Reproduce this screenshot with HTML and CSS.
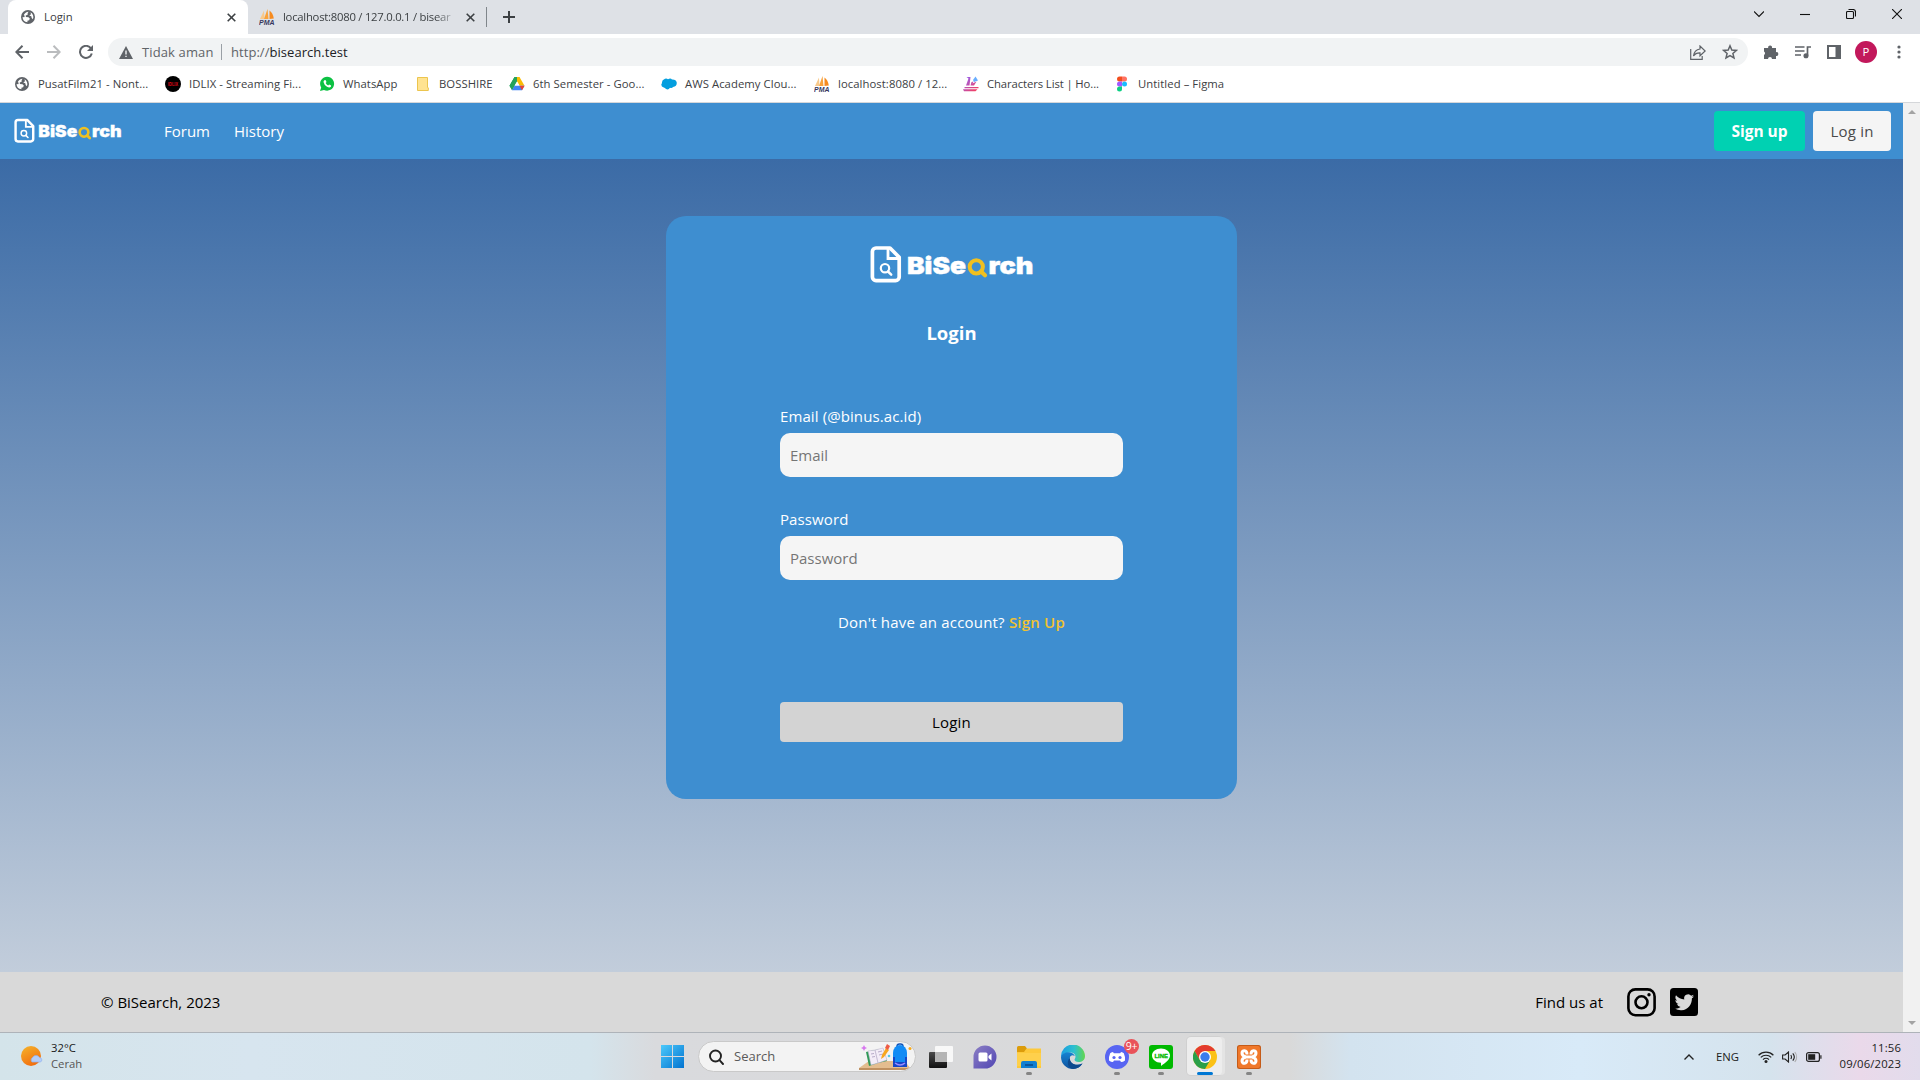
FILE: index.html
```html
<!DOCTYPE html>
<html lang="id">
<head>
<meta charset="utf-8">
<title>Login</title>
<link rel="stylesheet" href="styles.css">
</head>
<body>
<svg class="defs" width="0" height="0">
  <defs>
    <symbol id="globe" viewBox="0 0 14 14"><circle cx="7" cy="7" r="7" fill="#5f6368"/><path d="M7.600 1.700 6.500 3.200 7 4.300 4.600 5.800 5 7l2.500.2 1.300 1.300-.6 1.700-1.800.6.100 1.500A5.400 5.400 0 0 1 1.600 7l1.600.3.600-1.300-1-1A5.400 5.400 0 0 1 7.600 1.700zM9.500 2.300a5.400 5.400 0 0 1 2.400 6.900L10.700 8l-.4-1.700-2-.8 1.700-1.200z" fill="#fff"/></symbol>
    <symbol id="pma" viewBox="0 0 16 16"><path d="M5 1.500 5.500 10H1z" fill="#f8c98b"/><path d="M8.500 0 9.500 10H5z" fill="#f9a23b"/><path d="M10.500 1.500Q14 4 14.800 9.500L10.500 10z" fill="#f68b1f"/><text x="0" y="15.600" font-family="Liberation Sans" font-weight="700" font-style="italic" font-size="6.800" textLength="15.500" lengthAdjust="spacingAndGlyphs" fill="#38385e">PMA</text></symbol>
    <symbol id="logo" viewBox="870 245 164 39">
      <path d="M876 248h14l9.200 9.200V277a3.600 3.600 0 0 1-3.600 3.600H876a3.600 3.600 0 0 1-3.600-3.600v-25.400A3.600 3.600 0 0 1 876 248z" fill="none" stroke="#fff" stroke-width="3.700" stroke-linejoin="round"/>
      <path d="M888 248v10.500h11.500" fill="none" stroke="#fff" stroke-width="2.800"/>
      <circle cx="885" cy="268.200" r="4.200" fill="none" stroke="#fff" stroke-width="2.200"/><path d="m888 271.500 3.200 3.100" stroke="#fff" stroke-width="2.500" stroke-linecap="round"/>
      <g font-family="Inter, sans-serif" font-weight="900" font-size="23.400" fill="#fff" stroke="#fff" stroke-width=".4">
        <text x="907" y="273.700" textLength="59" lengthAdjust="spacingAndGlyphs">BiSe</text>
        <text x="988.500" y="273.700" textLength="45" lengthAdjust="spacingAndGlyphs">rch</text>
      </g>
      <circle cx="976.300" cy="266.800" r="6.600" fill="none" stroke="#f0c020" stroke-width="4"/><path d="m981 271.500 4 3.800" stroke="#f0c020" stroke-width="4.200" stroke-linecap="round"/>
    </symbol>
  </defs>
</svg>

<header class="chrome">
  <div class="tabstrip">
    <div class="tab tab-active">
      <svg width="14" height="14"><use href="#globe"/></svg>
      <span class="tab-title">Login</span>
      <svg width="9" height="9" viewBox="0 0 9 9" class="line"><path d="m.7.7 7.600 7.600M8.300.7.700 8.300"/></svg>
    </div>
    <div class="tab tab-second">
      <svg width="16" height="16"><use href="#pma"/></svg>
      <span class="tab-title fade">localhost:8080 / 127.0.0.1 / bisear</span>
      <svg width="9" height="9" viewBox="0 0 9 9" class="line"><path d="m.7.7 7.600 7.600M8.300.7.700 8.300"/></svg>
    </div>
    <svg class="line newtab" width="12" height="12" viewBox="0 0 12 12"><path d="M6 0v12M0 6h12"/></svg>
    <div class="window-buttons">
      <svg width="10" height="10" viewBox="0 0 10 10"><path d="m0 2.500 5 5 5-5"/></svg>
      <svg width="10" height="10" viewBox="0 0 10 10"><path d="M0 5.500h10"/></svg>
      <svg width="10" height="10" viewBox="0 0 10 10"><rect x=".5" y="2.500" width="7" height="7" rx="1"/><path d="M2.500.5H7A2.500 2.500 0 0 1 9.500 3v4.500"/></svg>
      <svg width="10" height="10" viewBox="0 0 10 10"><path d="m0 0 10 10M10 0 0 10"/></svg>
    </div>
  </div>

  <div class="toolbar">
    <svg class="nav-ico" width="14" height="14" viewBox="0 0 14 14"><path d="M14 7H1.500M7.500.8 1.300 7l6.200 6.200"/></svg>
    <svg class="nav-ico nav-off" width="14" height="14" viewBox="0 0 14 14"><path d="M0 7h12.500M6.500.8 12.700 7l-6.200 6.200"/></svg>
    <svg class="nav-ico" width="14" height="14" viewBox="0 0 14 14"><path d="M12 3.500A6 6 0 1 0 12.800 8.500"/><path d="M14 0v6H8z" fill="#5f6368" stroke="none"/></svg>
    <div class="omnibox">
      <svg width="14" height="13" viewBox="0 0 14 13"><path d="M7 0 14 13H0z" fill="#5f6368"/><path d="M6.300 4.500h1.400v4H6.300zM6.300 9.700h1.400v1.400H6.300z" fill="#f1f3f4"/></svg>
      <span class="insecure">Tidak aman</span>
      <span class="url">http://<b>bisearch.test</b></span>
      <svg width="16" height="15" viewBox="0 0 16 15" fill="none" stroke="#5f6368" stroke-width="1.200"><path d="M.7 4v10.300h11.500V11M10 1v3C6 4.500 4 7 3.500 11 5 8.500 7 7.700 10 7.800v3L15.200 6z"/></svg>
      <svg class="star" width="16" height="16" viewBox="0 0 16 16" fill="none" stroke="#5f6368" stroke-width="1.500"><path d="m8 1.800 1.800 4.200 4.600.4-3.500 3 1.100 4.500L8 11.500l-4 2.400 1.100-4.500-3.500-3L6.200 6z"/></svg>
    </div>
    <div class="actions">
      <svg width="16" height="16" viewBox="0 0 16 16"><path d="M1 4h4.200a2 2 0 1 1 3.800 0h4v4.200a1.900 1.900 0 1 1 0 3.700V15H9a2 2 0 0 0-4 0H1v-4a2 2 0 0 0 0-3.500z" fill="#5f6368"/></svg>
      <svg width="16" height="14" viewBox="0 0 16 14" fill="none" stroke="#5f6368" stroke-width="1.700"><path d="M0 2h9.500M0 6h9.500M0 10h6M12.500 10.500V2H16"/><circle cx="11" cy="10.800" r="1.700" fill="#5f6368"/></svg>
      <svg width="14" height="14" viewBox="0 0 14 14"><path d="M0 0h14v14H0zM2 2v10h6.500V2z" fill="#5f6368" fill-rule="evenodd"/></svg>
      <span class="avatar">P</span>
      <svg width="4" height="14" viewBox="0 0 4 14" fill="#5f6368"><circle cx="2" cy="2" r="1.600"/><circle cx="2" cy="7" r="1.600"/><circle cx="2" cy="12" r="1.600"/></svg>
    </div>
  </div>

  <nav class="bookmarks">
    <a><svg width="16" height="14" viewBox="0 0 16 14"><use href="#globe" x="1" width="14" height="14"/></svg>PusatFilm21 - Nont...</a>
    <a><svg width="16" height="16" viewBox="0 0 16 16"><circle cx="8" cy="8" r="8"/><text x="3" y="10" font-family="Liberation Sans" font-size="5" font-weight="700" fill="#e5091a" textLength="10" lengthAdjust="spacingAndGlyphs">IDLIX</text></svg>IDLIX - Streaming Fi...</a>
    <a><svg width="16" height="16" viewBox="0 0 16 16"><path d="M1 15 2.200 11.500A7 7 0 1 1 5 14z" fill="#0cc143"/><path d="M5.300 4.300 6.500 4l1 2-.8 1q.8 1.700 2.500 2.400l.9-.9 2 1-.2 1.300Q10.500 12.300 8 10.800 5 8.800 4.500 6 4.600 4.800 5.300 4.300z" fill="#fff"/></svg>WhatsApp</a>
    <a><svg width="16" height="14" viewBox="0 0 16 14"><path d="M2.500.5h10v10l.8.300v2.700h-10.800z" fill="#ffe391" stroke="#ecc54e"/></svg>BOSSHIRE</a>
    <a><svg width="16" height="14" viewBox="0 0 16 14"><path d="M5.500 0h5L8 4.500 3.200 13 .5 8.800z" fill="#25a35a"/><path d="M5.500 0h5l5 8.800h-5z" fill="#fbbc04"/><path d="M5.500 0h2.500v4.500L3 13.300.5 8.800z" fill="#25a35a"/><path d="M8 4.500 10.500 8.800h-5z" fill="#fff"/><path d="m3 13.300 2.500-4.500h10L13 13.300z" fill="#4285f4"/><path d="M10.500 8.800h5L13 13.300z" fill="#ea4335"/></svg>6th Semester - Goo...</a>
    <a><svg width="16" height="12" viewBox="0 0 16 12"><path d="M4 .7q1.500-.7 3 .6Q9.500-.5 11 1.600q4-.3 4.800 3.200Q15.800 8.800 12 9q-1 1.700-3 .8-1.500 2.500-4 1.200Q4 9.500 2.800 9.500.2 9 .3 6.500L1 5Q.5 2 4 .7z" fill="#049fdf"/></svg>AWS Academy Clou...</a>
    <a><svg width="16" height="16"><use href="#pma"/></svg>localhost:8080 / 12...</a>
    <a class="tight"><svg width="16" height="16" viewBox="0 0 16 16"><defs><linearGradient id="hy" y2="1"><stop stop-color="#8a63ff"/><stop offset="1" stop-color="#ff3a4d"/></linearGradient></defs><path d="M3.500 1h4L6.500 9.500H3l2.500-7zM7.500 9.500 8.500 6l2-.5-1 2 4-2-2.500 4zM1.500 11h14v1.200h-14zM0 13.300h14.500l-2 2H1z" fill="url(#hy)"/><path d="m10 4 2.500-3.500 2.500 4-4 1.500z" fill="#68aeff"/></svg>Characters List | Ho...</a>
    <a><svg width="16" height="16" viewBox="0 0 16 16"><path d="M8 .5H5.500a2.500 2.500 0 0 0 0 5H8z" fill="#f24e1e"/><path d="M8 .5h2.500a2.500 2.500 0 0 1 0 5H8z" fill="#ff7262"/><path d="M8 5.500H5.500a2.500 2.500 0 0 0 0 5H8z" fill="#a259ff"/><circle cx="10.500" cy="8" r="2.500" fill="#1abcfe"/><path d="M8 10.500H5.500A2.500 2.500 0 1 0 8 13z" fill="#0acf83"/></svg>Untitled – Figma</a>
  </nav>
</header>

<div class="viewport">
  <div class="page">
    <nav class="navbar">
      <svg class="brand" width="108" height="25.700"><use href="#logo"/></svg>
      <a class="forum">Forum</a>
      <a class="history">History</a>
      <div class="nav-buttons">
        <button class="btn btn-signup">Sign up</button>
        <button class="btn btn-login">Log in</button>
      </div>
    </nav>
    <main class="hero">
      <form class="card">
        <svg class="card-logo" width="164" height="39"><use href="#logo"/></svg>
        <h1>Login</h1>
        <div class="field">
          <label>Email (@binus.ac.id)</label>
          <input type="text" placeholder="Email">
        </div>
        <div class="field">
          <label>Password</label>
          <input type="password" placeholder="Password">
        </div>
        <p class="ask">Don't have an account? <a>Sign Up</a></p>
        <button type="button" class="submit">Login</button>
      </form>
    </main>
    <footer class="footer">
      <span class="copyright">© BiSearch, 2023</span>
      <span class="find">Find us at</span>
      <svg width="29" height="29" viewBox="0 0 29 29" fill="none" stroke="#000"><rect x="1.400" y="1.400" width="26.200" height="25.800" rx="7" stroke-width="2.600"/><circle cx="14.500" cy="14.300" r="6" stroke-width="2.600"/><circle cx="22" cy="6.800" r="1.700" fill="#000" stroke="none"/></svg>
      <svg width="28" height="28" viewBox="0 0 28 28"><rect width="28" height="28" rx="3.500"/><path d="M24 8.200q-1 .5-2 .6 1.200-.8 1.700-2-1.200.6-2.500.9a4 4 0 0 0-6.900 3.700q-5-.3-8.300-4.200-1.700 3.300 1.200 5.400-1 0-1.800-.5.100 3.200 3.200 4-.9.200-1.800 0 1 2.600 3.800 2.800-2.600 2-5.900 1.700Q8 22.500 11.500 22.300C18.500 22 22 16 21.900 10.300q1.200-.8 2.100-2.100z" fill="#d9d9d9"/></svg>
    </footer>
  </div>
  <div class="scrollbar">
    <svg width="8" height="4" viewBox="0 0 8 4"><path d="M4 0l4 4H0z" fill="#a3a3a3"/></svg>
    <svg width="8" height="4" viewBox="0 0 8 4"><path d="M4 4l4-4H0z" fill="#a3a3a3"/></svg>
  </div>
</div>

<footer class="taskbar">
  <div class="weather">
    <svg width="22" height="21" viewBox="0 0 22 21"><defs><linearGradient id="sun" x2=".5" y2="1"><stop stop-color="#f5b52c"/><stop offset="1" stop-color="#f2700f"/></linearGradient></defs><circle cx="10" cy="10" r="10" fill="url(#sun)"/><path d="M11 16a3 3 0 0 1 .5-4.500 4 4 0 0 1 7 0A2.400 2.400 0 0 1 19.500 16z" fill="#b4cdf8" stroke="#8fb0ef" stroke-width=".7"/></svg>
    <div class="stack">32°C<span class="dim">Cerah</span></div>
  </div>
  <div class="apps">
    <div class="app"><svg width="23" height="23" viewBox="0 0 23 23"><defs><linearGradient id="win" x2="1" y2="1"><stop stop-color="#4cc9fb"/><stop offset="1" stop-color="#0273d0"/></linearGradient></defs><path d="M0 0h11v11H0zM12 0h11v11H12zM0 12h11v11H0zM12 12h11v11H12z" fill="url(#win)"/></svg></div>
    <div class="search">
      <svg width="15" height="16" viewBox="0 0 15 16" fill="none" stroke="#222" stroke-width="1.900"><circle cx="6.500" cy="7" r="5.500"/><path d="m10.500 11.200 3.500 3.800" stroke-linecap="round"/></svg>
      <span>Search</span>
      <svg width="54" height="28" viewBox="0 0 54 28"><path d="M10 18h36l5 7H0z" fill="#e4bd8f"/><path d="M0 25h50l-4 2H0z" fill="#bf9060"/><path d="m7 9 9-2 8-1 4 12-9 2-9 3z" fill="#2f9a57"/><path d="m9 8 7-1 3 13-7 2zM16 7l8-2 4 12-9 3z" fill="#f3ecf7" stroke="#b9afc9" stroke-width=".5"/><path d="m12 11 3-.5M13 14l3-.5M19 9l4-1M20 12l4-1" stroke="#b8abc9"/><path d="m22 16 1-4 4-7 3 2-5 7z" fill="#f8a61e"/><path d="m26 5 2-4 3 2-2 4z" fill="#ee5b45"/><rect x="38" y="1" width="6" height="5" rx="2.500" fill="none" stroke="#1555b8" stroke-width="1.500"/><path d="M34 10a7 8 0 0 1 14 0v13H34z" fill="#128bf5"/><path d="M34 14h2v5h10v-5h2v10H34z" fill="#1646c7"/><path d="M36 20q5 4 10 0" fill="none" stroke="#9c8cff" stroke-width="1.500"/><path d="m5 2 1 2 2 1-2 1-1 2-1-2-2-1 2-1z" fill="#d777ee"/><circle cx="51" cy="5.500" r="1.500" fill="#f6a91d"/><circle cx="30" cy="13" r="1.300" fill="#58c8e8"/></svg>
    </div>
    <div class="app"><svg width="24" height="22" viewBox="0 0 24 22"><defs><linearGradient id="tv" y2="1" x2="0"><stop stop-color="#4b4b4b"/><stop offset="1" stop-color="#111"/></linearGradient></defs><rect y="6" width="18" height="16" rx="1" fill="url(#tv)"/><rect x="6" width="18" height="16" rx="1" fill="#fff" fill-opacity=".8"/><path d="M6 6h12v10H6z" fill="#b5b5b5"/></svg></div>
    <div class="app"><svg width="24" height="24" viewBox="0 0 24 24"><defs><linearGradient id="chat" x2="1" y2="1"><stop stop-color="#8c7fc4"/><stop offset="1" stop-color="#5146b4"/></linearGradient></defs><path d="M.5 23.500V12A11.500 11.500 0 1 1 12 23.500z" fill="url(#chat)"/><rect x="5.500" y="7.500" width="9" height="9" rx="1.500" fill="#fff"/><path d="m15.500 11 3-2.500v7l-3-2.500z" fill="#fff"/></svg></div>
    <div class="app running"><svg width="24" height="22" viewBox="0 0 24 22"><path d="M0 1.500A1.500 1.500 0 0 1 1.500 0H8l2 2.500L8 6H0z" fill="#dc9c0b"/><path d="M9.500 2.500H24V22H0V6h7z" fill="#fdc93b"/><path d="M0 7h24v13H0z" fill="#ffd75e" opacity=".5"/><path d="M4 17a2 2 0 0 1 2-2h12a2 2 0 0 1 2 2v5H4z" fill="#127fd2"/><path d="M8 18h8v2H8z" fill="#0b559c"/></svg></div>
    <div class="app"><svg width="24" height="24" viewBox="0 0 24 24"><defs><linearGradient id="ed1" x2="1"><stop stop-color="#1b9de2"/><stop offset=".55" stop-color="#2ec0cf"/><stop offset="1" stop-color="#62d74d"/></linearGradient><linearGradient id="ed2" y2="1" x2="0"><stop stop-color="#1583d2"/><stop offset="1" stop-color="#0f539f"/></linearGradient></defs><path d="M0 12a12 12 0 0 1 24-1c0 4-3 6-6.500 6-2.500 0-4-1-4-2.200 0-1 1-1.300 1-3.100C14.500 9 12 7.500 9 7.500 4 7.500 1 10 0 12z" fill="url(#ed1)"/><path d="M0 12c1-3.500 5-5 8-4.700 3 .3 5.300 1.900 5.800 3.700-4-2-5.300 1-5 3.500C9.500 19 15 21.500 21.500 18.500A12 12 0 0 1 12 24 12 12 0 0 1 0 12z" fill="url(#ed2)"/><path d="M8.800 13c0 6 6.700 8.500 12.700 5.500A12 12 0 0 1 12 24C7 23 5 17 8.800 13z" fill="#0d4a8e"/></svg></div>
    <div class="app running"><svg width="24" height="24" viewBox="0 0 24 24"><circle cx="12" cy="12" r="12" fill="#5865f2"/><path d="M8 7q-2 .3-2.800 1.300Q3.500 12 4 15.500 6 17 8 17l1-1.500h6l1 1.500q2 0 4-1.500.5-3.500-1.200-7.200Q18 7.300 16 7l-.8 1.200H8.800z" fill="#fff"/><circle cx="9" cy="12.500" r="1.600" fill="#5865f2"/><circle cx="15" cy="12.500" r="1.600" fill="#5865f2"/></svg><span class="badge">9+</span></div>
    <div class="app running"><svg width="24" height="24" viewBox="0 0 24 24"><rect width="24" height="24" rx="3" fill="#00b900"/><path d="M12 3.500c5 0 9 3 9 7 0 4.500-5 7.500-9 10.500v-3.200c-5-.2-9-3.200-9-7.300 0-4 4-7 9-7z" fill="#fff"/><text x="5.500" y="12.800" font-family="Liberation Sans" font-weight="700" font-size="5.600" textLength="13.500" lengthAdjust="spacingAndGlyphs" fill="#00b900" stroke="#00b900" stroke-width=".3">LINE</text></svg></div>
    <div class="app current"><svg width="24" height="24" viewBox="0 0 24 24"><circle cx="12" cy="12" r="12" fill="#fbc116"/><path d="M1.600 6A12 12 0 0 1 22.400 6H12l-5.200 9z" fill="#e33b2e"/><path d="M1.600 6A12 12 0 0 0 12 24l5.200-9H6.800z" fill="#2a9f49"/><circle cx="12" cy="12" r="6" fill="#fff"/><circle cx="12" cy="12" r="4.700" fill="#3a7cec"/></svg></div>
    <div class="app running"><svg width="24" height="24" viewBox="0 0 24 24"><rect width="24" height="24" rx="2.500" fill="#c55b18"/><rect x="1" y="1" width="22" height="22" rx="2" fill="#f0782a"/><path d="M10 9.500C10 4.500 5 5 5 8s1.500 3.500 4 4c-2.500.5-4 1-4 4s5 3.500 5-1.500M14 9.500C14 4.500 19 5 19 8s-1.500 3.500-4 4c2.500.5 4 1 4 4s-5 3.500-5-1.500M9 12h6" fill="none" stroke="#fff" stroke-width="3"/></svg></div>
  </div>
  <div class="tray">
    <svg width="10" height="6" viewBox="0 0 10 6" fill="none" stroke="#222" stroke-width="1.400"><path d="m.5 5.500 4.500-4.500 4.500 4.500"/></svg>
    <span class="lang">ENG</span>
    <svg width="16" height="12" viewBox="0 0 16 12" fill="none" stroke="#222" stroke-width="1.200"><path d="M.6 4.200a10.500 10.500 0 0 1 14.800 0M2.800 6.400a7.400 7.400 0 0 1 10.400 0M5 8.600a4.300 4.300 0 0 1 6 0"/><circle cx="8" cy="10.500" r="1.500" fill="#222" stroke="none"/></svg>
    <svg class="sound" width="16" height="12" viewBox="0 0 16 12" fill="none" stroke="#222" stroke-width="1.100"><path d="M.6 4v4h2.500L6.500 11V1L3.100 4zM8.800 4a3.500 3.500 0 0 1 0 4M10.800 2.400a5.600 5.600 0 0 1 0 7.200"/><path d="M12.800 1a8 8 0 0 1 0 10" stroke="#aaa"/></svg>
    <svg class="battery" width="16" height="10" viewBox="0 0 16 10"><rect x=".6" y=".6" width="12.800" height="8.800" rx="2" fill="none" stroke="#222" stroke-width="1.200"/><rect x="2.200" y="2.200" width="7" height="5.600" fill="#222"/><path d="M14.300 3.300h1.200v3.400h-1.200z" fill="#222"/></svg>
    <div class="stack clock">11:56<span>09/06/2023</span></div>
  </div>
</footer>
</body>
</html>
```
FILE: styles.css
```css
* { box-sizing: border-box; }
body {
  margin: 0;
  width: 1920px;
  height: 1080px;
  overflow: hidden;
  display: flex;
  flex-direction: column;
  font-family: "Open Sans", "Noto Sans", sans-serif;
  font-size: 15px;
}
svg { display: block; flex: none; }
.defs { position: absolute; }
button, input { font: inherit; border: 0; }

/* browser chrome */
.chrome { height: 103px; background: #fff; border-bottom: 1px solid #d5d7da; color: #3c4043; font-size: 11.3px; white-space: nowrap; }
.tabstrip { height: 34px; background: #dee1e6; display: flex; align-items: center; padding-left: 8px; }
.tab { height: 34px; display: flex; align-items: center; }
.tab-title { padding-bottom: 1px; }
.tab-active { width: 240px; background: #fff; border-radius: 8px 8px 0 0; padding: 0 12px 0 13px; }
.tab-active .tab-title { margin-left: 9px; flex: 1; }
.tab-second { width: 239px; padding-left: 11px; }
.tab-second::after { content: ""; width: 1px; height: 20px; background: #80868b; margin-left: 11px; }
.fade { width: 175px; flex: none; margin: 0 8px; letter-spacing: -.25px; -webkit-mask-image: linear-gradient(90deg, #000 87%, transparent); mask-image: linear-gradient(90deg, #000 87%, transparent); }
.line { fill: none; stroke: #3c4043; stroke-width: 1.6; }
.newtab { margin-left: 16px; stroke-width: 2; }
.window-buttons { margin-left: auto; margin-right: 18px; display: flex; gap: 36px; padding-bottom: 6px; fill: none; stroke: #111; stroke-width: 1.1; }

.toolbar { height: 36px; display: flex; align-items: center; padding-left: 15px; }
.nav-ico { fill: none; stroke: #5f6368; stroke-width: 2; margin-right: 18px; }
.nav-off { stroke: #babcbe; }
.toolbar .nav-ico:nth-child(3) { margin-right: 15px; }
.omnibox { width: 1640px; height: 28px; border-radius: 14px; background: #f1f3f4; display: flex; align-items: center; padding: 0 10px 0 11px; font-size: 13px; }
.insecure { color: #5f6368; margin-left: 9px; padding-right: 8px; border-right: 1px solid #9aa0a6; line-height: 16px; width: 80px; letter-spacing: .12px; }
.url { margin-left: 9px; color: #5f6368; flex: 1; letter-spacing: .05px; }
.url b { font-weight: 400; color: #202124; }
.star { margin-left: 16px; }
.actions { margin-left: 15px; display: flex; align-items: center; gap: 16px; }
.avatar { width: 22px; height: 22px; border-radius: 50%; background: #c2185b; color: #fff; text-align: center; line-height: 22px; margin: 0 4px 0 -2px; }

.bookmarks { height: 28px; display: grid; grid-template-columns: 151px 154px 96px 94px 152px 153px 149px 151px 160px; align-items: center; padding: 0 0 1px 14px; letter-spacing: .06px; }
.bookmarks a { display: flex; align-items: center; gap: 8px; }
.bookmarks .tight { letter-spacing: -.1px; }

/* page */
.viewport { display: flex; height: 929px; }
.page { width: 1903px; display: flex; flex-direction: column; }
.scrollbar { width: 17px; background: #f1f1f1; display: flex; flex-direction: column; justify-content: space-between; align-items: center; padding: 7px 0; }
.navbar { height: 56px; background: #3e8ed0; color: #fff; display: flex; align-items: center; padding: 0 12px 0 14px; }
.brand { margin-right: 42px; }
.forum { width: 70px; }
.nav-buttons { margin-left: auto; display: flex; gap: 8px; }
.btn { height: 40px; border-radius: 4px; padding: 0; }
.btn-signup { width: 91px; background: #00d1b2; color: #fff; font-weight: 700; font-size: 15.5px; letter-spacing: 0; }
.btn-login { width: 78px; background: #f5f5f5; color: #4a4a4a; letter-spacing: .2px; }
.hero { height: 813px; padding-top: 57px; background: linear-gradient(#3b6ba6, #c2cddb); }
.card { width: 571px; height: 583px; margin: 0 auto; background: #3e8ed0; border-radius: 20px; color: #fff; padding: 29px 114px 0; display: flex; flex-direction: column; }
.card-logo { margin: 0 auto; }
.card h1 { margin: 35px 0 54px; font-size: 18.5px; line-height: 28px; font-weight: 700; text-align: center; letter-spacing: 0; }
.field { margin-bottom: 27px; }
.field label { display: block; height: 32px; line-height: 30px; letter-spacing: .1px; }
.field label, .field input { margin-left: 0; }
.field input { display: block; width: 343px; height: 44px; border-radius: 10px; background: #f5f5f5; padding: 0 10px; }
.field input::placeholder { color: #757575; opacity: 1; }
.ask { margin: 1px 0 66px; line-height: 28px; text-align: center; letter-spacing: .2px; }
.ask a { color: #f1c232; font-weight: 600; }
.submit { height: 40px; border-radius: 4px; background: #d3d3d3; color: #000; letter-spacing: .2px; }
.footer { height: 60px; background: #d9d9d9; display: flex; align-items: center; padding: 0 205px 0 101px; }
.find { margin-left: auto; margin-right: 24px; }
.footer svg + svg { margin-left: 14px; }

/* taskbar */
.taskbar { height: 48px; border-top: 1px solid #aeb3b9; font-size: 11.3px; color: #1b1b1b; display: grid; grid-template-columns: 650px 621px 1fr; align-items: center; background: linear-gradient(90deg, #d4e4ea 0, #d7e5ef 250px, #d4e4ec 590px, #d9dadd 655px, #d9d9d9 1290px, #d3e3ef 1350px, #d8eaf8 1580px, #d5e3ed 1770px, #ead9ea 1860px, #e2dcec 1920px); }
.weather { display: flex; align-items: center; padding-left: 21px; gap: 8px; }
.stack { display: flex; flex-direction: column; line-height: 16px; padding-bottom: 2px; }
.dim { color: #555; }
.apps { display: flex; align-items: center; }
.app { width: 44px; height: 47px; position: relative; display: flex; align-items: center; justify-content: center; }
.app svg { position: relative; }
.running::after, .current::after { content: ""; position: absolute; bottom: 5px; left: 19px; width: 6px; height: 3px; border-radius: 2px; background: #858585; }
.current::before { content: ""; position: absolute; left: 4px; top: 4px; width: 35px; height: 38px; border-radius: 4px; background: #ededed; box-shadow: 3px 0 0 #e4e4e4, 0 0 0 1px #d0d0d0; }
.current::after { left: 14px; width: 16px; background: #0078d4; }
.badge { position: absolute; left: 29px; top: 6px; width: 15px; height: 15px; border-radius: 50%; background: #e9535a; color: #fff; font-size: 10.5px; line-height: 14px; text-align: center; letter-spacing: -.3px; }
.search { width: 218px; height: 31px; margin: 0 3px 0 4px; border-radius: 16px; background: #f3f3f3; border: 1px solid #c9c9c9; display: flex; align-items: center; padding: 0 2px 0 10px; font-size: 13px; color: #5a5a5a; }
.search span { flex: 1; margin-left: 10px; padding-bottom: 1px; }
.tray { display: flex; align-items: center; justify-content: flex-end; padding-right: 19px; }
.lang { margin: 0 19px 0 22px; }
.sound { margin: 0 8px; }
.clock { width: 62px; margin-left: 17px; white-space: nowrap; align-items: flex-end; letter-spacing: .15px; }
```
